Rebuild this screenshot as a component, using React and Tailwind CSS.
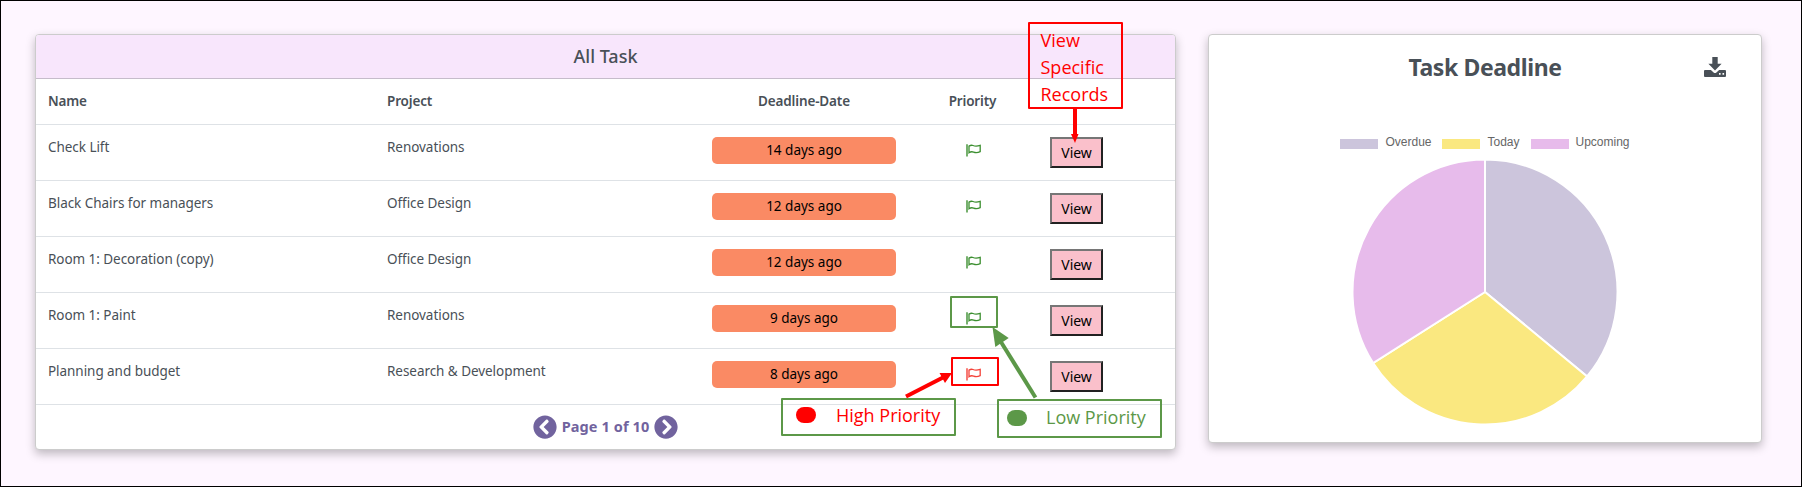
import { FaChevronCircleLeft, FaChevronCircleRight } from "react-icons/fa";

const rows = [
  ["Check Lift", "Renovations", "14 days ago", "low"],
  ["Black Chairs for managers", "Office Design", "12 days ago", "low"],
  ["Room 1: Decoration (copy)", "Office Design", "12 days ago", "low"],
  ["Room 1: Paint", "Renovations", "9 days ago", "low"],
  ["Planning and budget", "Research & Development", "8 days ago", "high"],
];

const grid = "grid grid-cols-[339px_325px_208px_130px_137px]";

function Flag({ high }) {
  return (
    <svg
      viewBox="0 0 15 13"
      fill="none"
      stroke="currentColor"
      className={"h-[13px] w-[15px] " + (high ? "text-[#f4433a]" : "text-[#3c8f30]")}
    >
      <path d="M1 0.3V12.6" strokeWidth="1.4" />
      <path
        d="M3 2.1C4.3 1.3 5.7 1 7 1.5C9 2.3 10.5 2.6 14.2 1.3V7.6C11.5 9 9.8 9 7.6 8.1C5.8 7.4 4.4 7.8 3 8.7Z"
        strokeWidth="1.3"
      />
    </svg>
  );
}

function TaskTable() {
  return (
    <section className="h-[416px] w-[1141px] rounded-[4px] border border-[#cccccc] bg-white shadow-[0_4px_10px_rgba(0,0,0,0.25)]">
      <h2 className="flex h-[44px] items-center justify-center rounded-t-[3px] border-b border-[#c6bccb] bg-[#f8e6fc] text-[18px] font-medium">
        All Task
      </h2>
      <div className={grid + " h-[45px] items-center text-[13.5px] font-semibold tracking-[-0.15px]"}>
        <div className="pl-3">Name</div>
        <div className="pl-3">Project</div>
        <div className="text-center">Deadline-Date</div>
        <div className="pr-px text-center">Priority</div>
      </div>
      {rows.map(([name, project, days, priority]) => (
        <div key={name} className={grid + " h-[56px] border-t border-[#dee2e6] pt-3 text-[13.5px] leading-[21px] tracking-[-0.05px]"}>
          <div className="pl-3">{name}</div>
          <div className="pl-3">{project}</div>
          <div className="px-3">
            <div className="h-[27px] rounded-[5px] bg-[#fa8a64] text-center leading-[27px] tracking-normal text-black">{days}</div>
          </div>
          <div className="flex justify-center pt-[7px]">
            <Flag high={priority === "high"} />
          </div>
          <div className="pl-3">
            <button className="h-[31px] w-[53px] border-2 border-t-[#767676] border-r-[#212121] border-b-[#212121] border-l-[#767676] bg-[#fac0cb] text-[14px] leading-[26px] text-black">
              View
            </button>
          </div>
        </div>
      ))}
      <div className="flex h-[45px] items-center justify-center gap-[5px] border-t border-[#dee2e6] text-[14.5px] font-bold tracking-[0.1px] text-[#71639e]">
        <FaChevronCircleLeft className="h-6 w-6" />
        <span>Page 1 of 10</span>
        <FaChevronCircleRight className="h-6 w-6" />
      </div>
    </section>
  );
}

function Download() {
  return (
    <svg viewBox="0 0 22 20" fill="currentColor" className="h-5 w-[22px]">
      <path d="M8.3 0H13.7V6.8H17.6L11 13.4L4.4 6.8H8.3Z" />
      <path
        fillRule="evenodd"
        d="M1 13H6.9L9.6 15.5Q11 16.7 12.4 15.5L15.1 13H21Q22 13 22 14V19Q22 20 21 20H1Q0 20 0 19V14Q0 13 1 13ZM15 16.1V17.7H16.6V16.1ZM18.5 16.1V17.7H20.1V16.1Z"
      />
    </svg>
  );
}

const slices = [
  { label: "Overdue", from: 0, to: 0.36, color: "#ccc5dc" },
  { label: "Today", from: 0.36, to: 0.66, color: "#fae880" },
  { label: "Upcoming", from: 0.66, to: 1, color: "#e7bbeb" },
];

function slicePath(from, to) {
  const r = 132.5;
  const point = (t) => `${r * Math.sin(2 * Math.PI * t)} ${-r * Math.cos(2 * Math.PI * t)}`;
  return `M0 0L${point(from)}A${r} ${r} 0 0 1 ${point(to)}Z`;
}

function DeadlineCard() {
  return (
    <section className="h-[409px] w-[554px] rounded-[4px] border border-[#cccccc] bg-white shadow-[0_4px_10px_rgba(0,0,0,0.25)]">
      <div className="grid h-[64px] grid-cols-[1fr_auto_1fr] items-center px-[35px]">
        <h2 className="col-start-2 text-[23px] font-bold tracking-[-0.4px]">Task Deadline</h2>
        <div className="justify-self-end">
          <Download />
        </div>
      </div>
      <div className="mt-[35px] flex h-4 items-center justify-center gap-[11px] font-['Liberation_Sans',sans-serif] text-[12px] text-[#666666]">
        {slices.map((s) => (
          <div key={s.label} className="flex items-center gap-[7px]">
            <span className="mt-[3px] h-[10px] w-[38px]" style={{ backgroundColor: s.color }} />
            <span className="pb-px leading-4">{s.label}</span>
          </div>
        ))}
      </div>
      <svg viewBox="-134 -134 268 268" className="mx-auto mt-[8px] h-[268px] w-[268px]">
        {slices.map((s) => (
          <path key={s.label} d={slicePath(s.from, s.to)} fill={s.color} stroke="#fff" strokeWidth="2" />
        ))}
      </svg>
    </section>
  );
}

function Annotations() {
  return (
    <div className="pointer-events-none absolute -inset-px font-['Open_Sans',sans-serif] text-[18px] leading-[27px]">
      <div className="absolute top-[22px] left-[1028px] h-[87px] w-[95px] rounded-[1px] border-2 border-[#ff0000] pt-[3px] pl-[10.5px] text-[#ff0000]">
        <div>View</div>
        <div>Specific</div>
        <div>Records</div>
      </div>
      <div className="absolute top-[296px] left-[950px] h-[32px] w-[48px] rounded-[1px] border-2 border-[#5c9848]" />
      <div className="absolute top-[357px] left-[951px] h-[29px] w-[48px] rounded-[1px] border-2 border-[#ff0000]" />
      <div className="absolute top-[398px] left-[781px] flex h-[38px] w-[175px] gap-[20px] rounded-[1px] border-2 border-[#5c9848] pt-[2px] pl-[13px] text-[#ff0000]">
        <span className="mt-[5px] h-[16px] w-[20px] rounded-[8px] bg-[#ff0000]" />
        <span>High Priority</span>
      </div>
      <div className="absolute top-[399px] left-[997px] flex h-[39px] w-[165px] gap-[19px] rounded-[1px] border-2 border-[#5c9848] pt-[3px] pl-[8px] text-[#5c9848]">
        <span className="mt-[6px] h-[16px] w-[20px] rounded-[8px] bg-[#5c9848]" />
        <span>Low Priority</span>
      </div>
      <svg viewBox="0 0 1802 487" className="absolute inset-0 h-full w-full">
        <path d="M1075 109V135" stroke="#ff0000" strokeWidth="4" />
        <path d="M1071 134H1078.5L1075 143Z" fill="#ff0000" />
        <path d="M906 396.5L943 377.5" stroke="#ff0000" strokeWidth="4" />
        <path d="M952 373L939.5 373L945 383Z" fill="#ff0000" />
        <path d="M1035.5 397.5L1001 342" stroke="#5c9848" strokeWidth="4" />
        <path d="M992.5 327L1008.7 338L995.3 347Z" fill="#5c9848" />
      </svg>
    </div>
  );
}

export default function App() {
  return (
    <main className="relative flex h-[487px] w-[1802px] gap-8 border border-black bg-[#fef6ff] pt-[33px] pl-[34px] font-['Noto_Sans',sans-serif] text-[#495057]">
      <TaskTable />
      <DeadlineCard />
      <Annotations />
    </main>
  );
}
